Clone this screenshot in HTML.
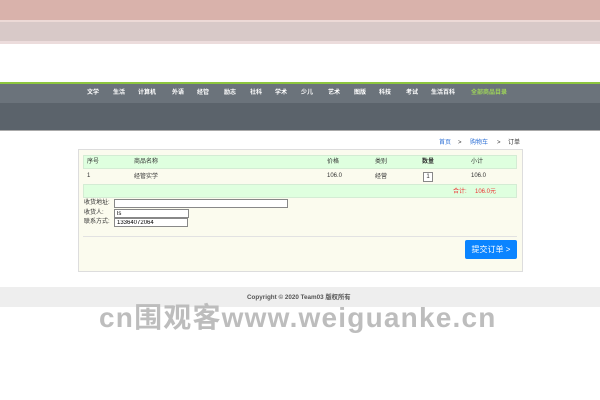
<!DOCTYPE html>
<html><head><meta charset="utf-8"><style>
*{margin:0;padding:0;box-sizing:border-box}
body{width:600px;height:400px;background:#fff;font-family:"Liberation Sans","Noto Sans CJK SC",sans-serif;font-size:6px;color:#333;position:relative;overflow:hidden}
.a{position:absolute}
.nav span{position:absolute;top:90px;line-height:7px;color:#fff;font-weight:bold;font-size:6px;white-space:nowrap}
.t{position:absolute;font-size:6px;line-height:7px;white-space:nowrap}
input{position:absolute;border:1px solid #888;background:#fff;font-size:6px;padding-left:2px;height:9px;font-family:"Liberation Sans",sans-serif}
</style></head><body>
<div class="a" style="left:0;top:0;width:600px;height:20px;background:#d9b2ab"></div>
<div class="a" style="left:0;top:20px;width:600px;height:2px;background:#ecd9d6"></div>
<div class="a" style="left:0;top:22px;width:600px;height:19px;background:#d8c9c8"></div>
<div class="a" style="left:0;top:41px;width:600px;height:3px;background:#ecdcdc"></div>
<div class="a" style="left:0;top:82px;width:600px;height:2px;background:#8dc63f"></div>
<div class="a" style="left:0;top:84px;width:600px;height:19px;background:#6b737b"></div>
<div class="a" style="left:0;top:103px;width:600px;height:27px;background:#5b636b"></div>
<div class="a" style="left:0;top:130px;width:600px;height:1px;background:#aaa"></div>
<div class="nav">
<span style="left:87px">文学</span><span style="left:113px">生活</span><span style="left:138px">计算机</span><span style="left:172px">外语</span><span style="left:197px">经管</span><span style="left:224px">励志</span><span style="left:250px">社科</span><span style="left:275px">学术</span><span style="left:301px">少儿</span><span style="left:328px">艺术</span><span style="left:354px">图版</span><span style="left:379px">科技</span><span style="left:406px">考试</span><span style="left:431px">生活百科</span><span style="left:471px;color:#9ed35a">全部商品目录</span>
</div>
<div class="t" style="left:439px;top:140px;color:#2b6fd6">首页</div>
<div class="t" style="left:458px;top:140px">&gt;</div>
<div class="t" style="left:470px;top:140px;color:#2b6fd6">购物车</div>
<div class="t" style="left:497px;top:140px">&gt;</div>
<div class="t" style="left:508px;top:140px">订单</div>
<div class="a" style="left:78px;top:149px;width:445px;height:123px;background:#fbfbee;border:1px solid #ddd"></div>
<div class="a" style="left:83px;top:155px;width:434px;height:14px;background:#dfffdf;border:1px solid #d4ecd4"></div>
<div class="t" style="left:87px;top:159px">序号</div><div class="t" style="left:134px;top:159px">商品名称</div><div class="t" style="left:327px;top:159px">价格</div><div class="t" style="left:375px;top:159px">类别</div><div class="t" style="left:422px;top:159px;font-weight:bold">数量</div><div class="t" style="left:471px;top:159px">小计</div>
<div class="t" style="left:87px;top:173px">1</div><div class="t" style="left:134px;top:174px">经管实学</div><div class="t" style="left:327px;top:173px">106.0</div><div class="t" style="left:375px;top:174px">经营</div>
<div class="a" style="left:423px;top:172px;width:10px;height:10px;border:1px solid #888;background:#fff;font-size:6px;text-align:center;line-height:8px">1</div>
<div class="t" style="left:471px;top:173px">106.0</div>
<div class="a" style="left:83px;top:184px;width:434px;height:14px;background:#dfffdf;border:1px solid #d4ecd4"></div>
<div class="t" style="left:453px;top:189px;color:#e33">合计:</div><div class="t" style="left:475px;top:189px;color:#e33">106.0元</div>
<div class="t" style="left:84px;top:200px">收货地址:</div><input style="left:114px;top:199px;width:174px" value="">
<div class="t" style="left:84px;top:210px">收货人:</div><input style="left:114px;top:209px;width:75px" value="ls">
<div class="t" style="left:84px;top:219px">联系方式:</div><input style="left:114px;top:218px;width:74px" value="13364072064">
<div class="a" style="left:83px;top:236px;width:434px;height:1px;background:#e2e2e2"></div>
<div class="a" style="left:465px;top:240px;width:52px;height:19px;background:#0a84ff;border-radius:2px;color:#fff;font-size:8px;line-height:19px;text-align:center">提交订单 &gt;</div>
<div class="a" style="left:0;top:287px;width:600px;height:20px;background:#eee"></div>
<div class="t" style="left:247px;top:294px;font-size:6.3px;color:#555;font-weight:bold">Copyright © 2020 Team03 版权所有</div>
<div class="t" style="left:99px;top:304px;font-size:28px;line-height:28px;color:#bdbdbd;font-weight:bold;letter-spacing:1.2px">cn围观客www.weiguanke.cn</div>
</body></html>
